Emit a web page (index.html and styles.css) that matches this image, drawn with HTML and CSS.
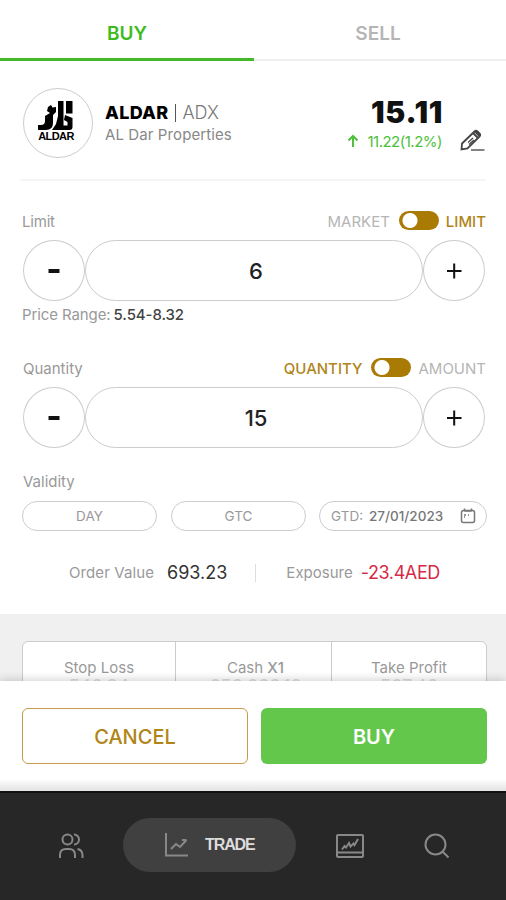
FILE: index.html
```html
<!DOCTYPE html>
<html lang="en">
<head>
    <meta charset="utf-8">
    <title>Trade</title>
    <meta name="viewport" content="width=device-width, initial-scale=1.0">
    <link rel="stylesheet" href="styles.css">
</head>
<body>
    <main class="content">
        <div class="tabs">
            <div class="tab active"><span>BUY</span></div>
            <div class="tab"><span>SELL</span></div>
        </div>

        <div class="stock">
            <div class="logo">
                <svg width="38" height="31" viewBox="0 0 38 31">
                    <path d="M21 1h5.500v29H15l4-6 2-8zM29 1h6.500v12.500H29zM11 7l3-2 1.500 2.500L19 7v5l-3 3v8q0 7-7 7H1v-5h3q4 0 4-4v-5l5-3-3-2zM28 15l7.500 3v9q0 3-3 3H26v-4.500h4.500V22L27 20z"/>
                </svg>
                <span class="logo-name">ALDAR</span>
            </div>
            <div class="stock-name">
                <div class="symbol"><b>ALDAR</b><i></i><span>ADX</span></div>
                <div class="company">AL Dar Properties</div>
            </div>
            <div class="stock-price">
                <div class="price">15.11</div>
                <div class="change">
                    <svg width="12" height="14" viewBox="0 0 12 14"><path d="M6 13V2M1.500 6.500L6 2l4.500 4.500"/></svg>
                    <span>11.22(1.2%)</span>
                </div>
            </div>
            <svg class="edit" width="25" height="23" viewBox="0 0 25 23">
                <path d="M1.500 20.500l.5-6L14.500 2.500q1.500-1.500 3 0l2 2q1.500 1.500 0 3L7.500 19.500zM13 4l5 5M15 2.500l4.500 4.500"/>
                <path class="edit-thin" d="M8 13.500l5-4.500M9 15.500l5-4.500"/>
                <path class="edit-line" d="M11 21h13.500"/>
            </svg>
        </div>

        <div class="row-head">
            <span class="label limit-label">Limit</span>
            <span class="option market">MARKET</span>
            <span class="switch"></span>
            <span class="option limit on">LIMIT</span>
        </div>
        <div class="stepper">
            <button class="round"><svg width="20" height="20" viewBox="0 0 20 20"><path class="minus" d="M4.500 10h11"/></svg></button>
            <div class="value">6</div>
            <button class="round"><svg width="20" height="20" viewBox="0 0 20 20"><path d="M3 10h14.500M10.200 2.500v15"/></svg></button>
        </div>
        <div class="range"><span>Price Range:</span><b>5.54-8.32</b></div>

        <div class="row-head second">
            <span class="label quantity-label">Quantity</span>
            <span class="option quantity on">QUANTITY</span>
            <span class="switch"></span>
            <span class="option amount">AMOUNT</span>
        </div>
        <div class="stepper">
            <button class="round"><svg width="20" height="20" viewBox="0 0 20 20"><path class="minus" d="M4.500 10h11"/></svg></button>
            <div class="value">15</div>
            <button class="round"><svg width="20" height="20" viewBox="0 0 20 20"><path d="M3 10h14.500M10.200 2.500v15"/></svg></button>
        </div>

        <div class="validity">Validity</div>
        <div class="pills">
            <div class="pill">DAY</div>
            <div class="pill">GTC</div>
            <div class="pill date">
                <span>GTD:</span><b>27/01/2023</b>
                <svg width="16" height="16" viewBox="0 0 16 16"><rect x="1.500" y="2.500" width="13" height="12" rx="2"/><path d="M4.500 .5v3M11.500 .5v3M5 3h6M4 7h2M8 7h1M4 9h1"/></svg>
            </div>
        </div>

        <div class="totals">
            <span class="total-label order">Order Value</span>
            <span class="total-value">693.23</span>
            <span class="sep"></span>
            <span class="total-label">Exposure</span>
            <span class="total-value minus-value">-23.4AED</span>
        </div>

        <div class="summary">
            <div class="cells">
                <div class="cell stop"><span>Stop Loss</span><em>546.34</em></div>
                <div class="cell cash"><span>Cash <b>X1</b></span><em>656,666.12</em></div>
                <div class="cell profit"><span>Take Profit</span><em>567.46</em></div>
            </div>
        </div>
    </main>

    <div class="actions">
        <button class="btn cancel">CANCEL</button>
        <button class="btn buy">BUY</button>
    </div>

    <nav class="nav">
        <svg class="users" width="26" height="26" viewBox="0 0 26 26"><circle cx="9.500" cy="6.500" r="5"/><path d="M2 25v-3q0-6 6-6h3q6 0 6 6v3M16 1.500a5 5 0 0 1 0 10M19.500 16q5 1 5 6v3"/></svg>
        <div class="nav-active">
            <svg width="24" height="24" viewBox="0 0 24 24"><path d="M2 0v22.500h22M7 16l5-5 4 3 6.500-7M18 7h4.500"/></svg>
            <span>TRADE</span>
        </div>
        <svg class="market-icon" width="28" height="24" viewBox="0 0 28 24"><rect x="1" y="1" width="26" height="22" rx="1"/><path d="M1 18.500h26M6 15.500l2.500-3.500 1.500 1.500 3-4.500 1.500 3.500 3-3 1 1.500 3.500-6"/></svg>
        <svg class="search" width="26" height="26" viewBox="0 0 26 26"><circle cx="11.500" cy="11.500" r="10"/><path d="M18.500 18.500l6 6"/></svg>
    </nav>
</body>
</html>
```

FILE: styles.css
```css
* {
    box-sizing: border-box;
}
body {
    margin: 0;
    width: 506px;
    height: 900px;
    overflow: hidden;
    background: #fff;
    font-family: Inter, "Open Sans", sans-serif;
    color: #999;
}
svg {
    display: block;
    flex: none;
    fill: none;
    stroke: currentColor;
    stroke-width: 2;
}
button {
    font-family: inherit;
    padding: 0;
    margin: 0;
    background: #fff;
}
b {
    font-weight: 500;
}
.content {
    height: 681px;
    overflow: hidden;
}
.tabs {
    display: flex;
    height: 61px;
}
.tab {
    width: 252px;
    padding-top: 23px;
    border-bottom: 2px solid #f0f0f0;
    text-align: center;
    font-size: 19px;
    line-height: 22px;
    font-weight: 600;
    color: #b5b5b5;
}
.tab.active {
    width: 254px;
    color: #3dbb1c;
    border-bottom: 3px solid #43b929;
}
.tab:last-child {
    padding-right: 4px;
}

.stock {
    display: flex;
    height: 120px;
    margin: 0 20px;
    padding: 27px 0 0 3px;
    border-bottom: 2px solid #f5f5f5;
}
.logo {
    display: flex;
    flex-direction: column;
    align-items: center;
    width: 70px;
    height: 70px;
    padding: 11px 4px 0 0;
    border: 1px solid #ccc;
    border-radius: 50%;
    color: #000;
}
.logo svg {
    fill: #000;
    stroke: none;
}
.logo-name {
    font: bold 11px/11px "Liberation Sans", sans-serif;
    letter-spacing: -0.6px;
}
.stock-name {
    padding: 13px 0 0 12px;
    width: 180px;
}
.symbol {
    display: flex;
    align-items: center;
    height: 23px;
    font-size: 18px;
    line-height: 23px;
}
.symbol b {
    font-weight: 800;
    color: #000;
    letter-spacing: 0.3px;
}
.symbol i {
    width: 1px;
    height: 18px;
    margin: 0 7px 0 6px;
    background: #555;
}
.symbol span {
    font-weight: 300;
    color: #777;
}
.company {
    font-size: 15px;
    line-height: 22px;
    letter-spacing: 0.1px;
    color: #888;
}
.stock-price {
    width: 169px;
    padding-top: 8px;
    text-align: right;
}
.price {
    font-size: 30px;
    line-height: 32px;
    font-weight: 900;
    color: #111;
    letter-spacing: 0.7px;
    margin-right: -1px;
}
.change {
    display: flex;
    justify-content: flex-end;
    align-items: center;
    gap: 8px;
    height: 26px;
    font-size: 15px;
    letter-spacing: -0.5px;
    color: #4cc13a;
}
.edit {
    margin: 41px 0 0 18px;
    color: #444;
    stroke-width: 1.8;
}
.edit-thin {
    stroke-width: 1.2;
}
.edit-line {
    stroke: #777;
}

.row-head {
    display: flex;
    align-items: center;
    height: 22px;
    margin: 29px 20px 0 22px;
    font-size: 15px;
}
.row-head.second {
    margin-top: 31px;
}
.label {
    flex: 1;
}
.limit-label {
    letter-spacing: -0.2px;
}
.quantity-label {
    padding-left: 1px;
}
.option {
    color: #b5b5b5;
}
.option.on {
    color: #b08518;
    font-weight: 500;
}
.switch {
    width: 40px;
    height: 19px;
    margin: -2px 7px 0 9px;
    border-radius: 10px;
    background: radial-gradient(circle at 11px 50%, #fff 7px, #a97b05 8px);
}
.stepper {
    display: flex;
    height: 61px;
    margin: 8px 20px 0 23px;
    padding-right: 1px;
}
.round {
    display: flex;
    align-items: center;
    justify-content: center;
    width: 62px;
    height: 61px;
    border: 1px solid #ccc;
    border-radius: 50%;
    color: #111;
}
.minus {
    stroke-width: 4;
}
.value {
    flex: 1;
    padding-left: 4px;
    border: 1px solid #ccc;
    border-radius: 31px;
    text-align: center;
    font-size: 22px;
    line-height: 60px;
    font-weight: 500;
    color: #222;
}
.range {
    display: flex;
    gap: 3px;
    height: 22px;
    margin: 3px 0 0 22px;
    font-size: 15px;
    line-height: 22px;
    letter-spacing: -0.1px;
}
.range b {
    color: #444;
}
.validity {
    margin: 23px 0 0 23px;
    font-size: 15px;
    line-height: 22px;
}
.pills {
    display: flex;
    margin: 8px 19px 0 22px;
}
.pill {
    width: 135px;
    height: 30px;
    margin-right: 14px;
    border: 1px solid #ccc;
    border-radius: 15px;
    text-align: center;
    font-size: 13.5px;
    line-height: 28px;
}
.pill.date {
    display: flex;
    align-items: center;
    width: 168px;
    margin: 0 0 0 -1px;
    padding-left: 11px;
}
.date b {
    margin: 0 17px 0 6px;
    color: #777;
}
.date svg {
    stroke-width: 1.5;
    color: #777;
}
.totals {
    display: flex;
    align-items: center;
    height: 83px;
    padding-left: 69px;
    font-size: 15px;
}
.order {
    letter-spacing: 0.1px;
}
.total-value {
    margin-left: 13px;
    font-size: 18px;
    color: #333;
}
.total-value.minus-value {
    margin-left: 8px;
    letter-spacing: -0.4px;
    color: #d62b45;
}
.sep {
    width: 1px;
    height: 18px;
    margin: 0 30px 0 28px;
    background: #ddd;
}
.summary {
    height: 80px;
    padding: 27px 19px 0 22px;
    background: #f0f0f0;
}
.cells {
    display: flex;
    height: 90px;
    border: 1px solid #ccc;
    border-radius: 6px;
    background: #fff;
}
.cell {
    display: flex;
    flex-direction: column;
    align-items: center;
    width: 154px;
    padding-top: 15px;
    font-size: 15px;
    line-height: 21px;
}
.cell em {
    margin-top: -2px;
    font-style: normal;
    font-size: 18px;
    line-height: 22px;
    color: #ddd;
}
.cell.stop {
    width: 152px;
}
.cell.cash {
    width: 157px;
    padding-left: 4px;
    border: solid #ccc;
    border-width: 0 1px;
}

.actions {
    display: flex;
    position: relative;
    gap: 13px;
    height: 110px;
    padding: 27px 19px 0 22px;
    background: linear-gradient(#fff 98px, #e2e2e2);
    box-shadow: 0 -1px 9px rgba(0, 0, 0, 0.2);
}
.btn {
    width: 226px;
    height: 56px;
    padding-top: 2px;
    border: 1px solid #c69b50;
    border-radius: 6px;
    font-size: 20px;
    font-weight: 500;
    color: #b08518;
}
.btn.buy {
    border: none;
    background: #62c74b;
    color: #fff;
    font-weight: 600;
}
.nav {
    display: flex;
    position: relative;
    align-items: center;
    height: 109px;
    padding: 0 0 2px 58px;
    border-top: 2px solid #111;
    background: #272727;
    color: #888;
}
.nav-active {
    display: flex;
    align-items: center;
    width: 173px;
    height: 54px;
    margin: -2px 40px 0 39px;
    padding-left: 41px;
    border-radius: 27px;
    background: #404040;
}
.nav-active span {
    margin-left: 17px;
    font: bold 16px/20px "Liberation Sans", sans-serif;
    letter-spacing: -1.1px;
    color: #ddd;
}
.search {
    margin-left: 60px;
}
```
